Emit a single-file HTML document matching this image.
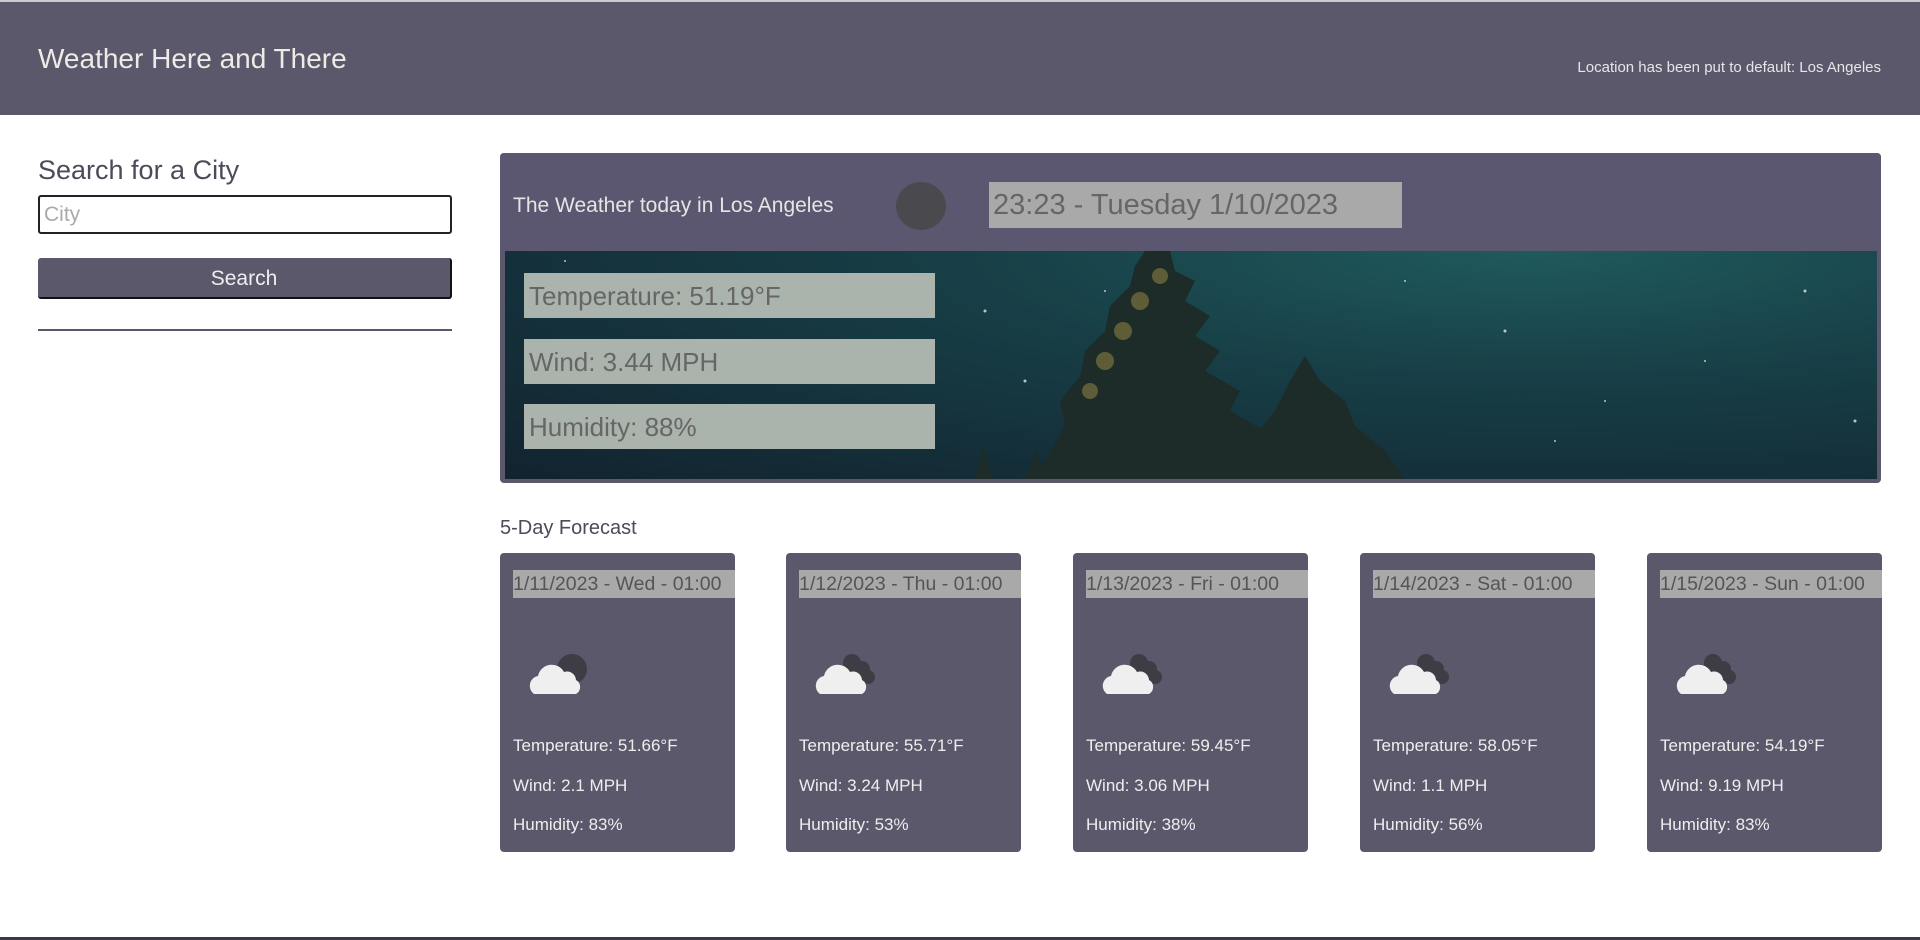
<!DOCTYPE html>
<html><head><meta charset="utf-8"><style>
*{box-sizing:border-box;margin:0;padding:0}
body{width:1920px;height:940px;background:#fff;font-family:"Liberation Sans",sans-serif;position:relative;overflow:hidden}
.hdr{position:absolute;left:0;top:0;width:1920px;height:115px;background:#5c586c;border-top:2px solid #ccc}
.hdr h1{position:absolute;left:38px;top:41px;font-size:28px;font-weight:normal;color:#eeeae6}
.hdr p{position:absolute;right:39px;top:57px;font-size:15px;color:#e6e6e6}
.sh{position:absolute;left:38px;top:155px;font-size:27px;color:#4d4a5a}
.inp{position:absolute;left:38px;top:195px;width:414px;height:39px;border:2px solid #222;border-radius:3px;font-size:21px;color:#aaa;padding:6px 4px}
.btn{position:absolute;left:38px;top:258px;width:414px;height:41px;background:#5c586c;border-radius:3px;border-right:2px solid #111;border-bottom:2px solid #111;color:#eee;font-size:21px;text-align:center;line-height:41px}
.hr{position:absolute;left:38px;top:329px;width:414px;height:2px;background:#555a6a}
.box{position:absolute;left:500px;top:153px;width:1381px;height:330px;background:#5c586c;border-radius:4px;overflow:hidden}
.top{position:absolute;left:0;top:0;width:1381px;height:98px;background:#5b5770}
.top h2{position:absolute;left:13px;top:41px;font-size:21px;font-weight:normal;color:#e8e4e4}
.moon{position:absolute;left:396px;top:29px;width:50px;height:48px;border-radius:50%;background:#4a4a4e}
.date{position:absolute;left:489px;top:29px;width:413px;height:46px;background:#a9a9a9;color:#666;font-size:29px;padding:7px 4px}
.img{position:absolute;left:5px;top:98px;width:1372px;height:228px;background:radial-gradient(ellipse at 75% 0%,#1f5a5c 0%,#173e46 40%,#12232f 100%)}
.stat{position:absolute;left:19px;width:411px;height:45px;background:#aab3ac;color:#666;font-size:26px;padding:8px 5px}
.fl{position:absolute;left:500px;top:517px;font-size:20px;color:#4d4a5a}
.card{position:absolute;top:553px;width:235px;height:299px;background:#5c586c;border-radius:4px;color:#eee;font-size:17px}
.card .d{position:absolute;left:13px;top:17px;right:0;height:28px;background:#a9a9a9;color:#555;font-size:19.5px;line-height:28px;white-space:nowrap;overflow:hidden}
.card svg{position:absolute;left:28px;top:96px}
.card .t{position:absolute;left:13px}
</style></head><body>
<div class="hdr"><h1>Weather Here and There</h1><p>Location has been put to default: Los Angeles</p></div>
<div class="sh">Search for a City</div>
<div class="inp">City</div>
<div class="btn">Search</div>
<div class="hr"></div>
<div class="box">
 <div class="img">
  <svg width="1372" height="228" style="position:absolute;left:0;top:0">
   <g fill="#1d2c28">
    <path d="M640 0 L665 0 L670 20 L690 30 L680 50 L705 65 L690 85 L715 100 L700 120 L735 140 L725 160 L760 180 L770 228 L530 228 L545 200 L560 175 L555 150 L575 125 L580 100 L600 80 L605 55 L625 35 L630 15Z"/>
    <path d="M800 105 L815 130 L840 150 L850 175 L880 200 L900 228 L720 228 L745 190 L770 160 L785 130Z"/>
    <path d="M470 228 L478 195 L488 228Z M520 228 L530 200 L545 228Z"/>
   </g>
   <g fill="#7a7240" opacity=".7"><circle cx="655" cy="25" r="8"/><circle cx="635" cy="50" r="9"/><circle cx="618" cy="80" r="9"/><circle cx="600" cy="110" r="9"/><circle cx="585" cy="140" r="8"/></g>
   <g fill="#fff" opacity=".7"><circle cx="480" cy="60" r="1.5"/><circle cx="520" cy="130" r="1.5"/><circle cx="600" cy="40" r="1"/><circle cx="1000" cy="80" r="1.5"/><circle cx="1100" cy="150" r="1"/><circle cx="1300" cy="40" r="1.5"/><circle cx="1200" cy="110" r="1"/><circle cx="900" cy="30" r="1"/><circle cx="60" cy="10" r="1"/><circle cx="1350" cy="170" r="1.5"/><circle cx="1050" cy="190" r="1"/></g>
  </svg>
  <div class="stat" style="top:22px">Temperature: 51.19°F</div>
  <div class="stat" style="top:88px">Wind: 3.44 MPH</div>
  <div class="stat" style="top:153px">Humidity: 88%</div>
 </div>
 <div class="top"><h2>The Weather today in Los Angeles</h2><div class="moon"></div><div class="date">23:23 - Tuesday 1/10/2023</div></div>
</div>
<div class="fl">5-Day Forecast</div>

<div class="card" style="left:500px"><div class="d">1/11/2023 - Wed - 01:00</div>
<svg width="70" height="50"><circle cx="44" cy="20" r="15" fill="#3e3c44"/><path d="M6 45 a10 10 0 0 1 4 -18 a14 14 0 0 1 26 -4 a9 9 0 0 1 12 8 a8 8 0 0 1 0 14Z" fill="#efefef"/></svg>
<div class="t" style="top:183px">Temperature: 51.66°F</div><div class="t" style="top:223px">Wind: 2.1 MPH</div><div class="t" style="top:262px">Humidity: 83%</div></div>

<div class="card" style="left:786px"><div class="d">1/12/2023 - Thu - 01:00</div>
<svg width="70" height="50"><circle cx="38" cy="14" r="9" fill="#3e3c44"/><circle cx="48" cy="20" r="8" fill="#3e3c44"/><circle cx="54" cy="28" r="7" fill="#3e3c44"/><path d="M6 45 a10 10 0 0 1 4 -18 a14 14 0 0 1 26 -4 a9 9 0 0 1 12 8 a8 8 0 0 1 0 14Z" fill="#efefef"/></svg>
<div class="t" style="top:183px">Temperature: 55.71°F</div><div class="t" style="top:223px">Wind: 3.24 MPH</div><div class="t" style="top:262px">Humidity: 53%</div></div>

<div class="card" style="left:1073px"><div class="d">1/13/2023 - Fri - 01:00</div>
<svg width="70" height="50"><circle cx="38" cy="14" r="9" fill="#3e3c44"/><circle cx="48" cy="20" r="8" fill="#3e3c44"/><circle cx="54" cy="28" r="7" fill="#3e3c44"/><path d="M6 45 a10 10 0 0 1 4 -18 a14 14 0 0 1 26 -4 a9 9 0 0 1 12 8 a8 8 0 0 1 0 14Z" fill="#efefef"/></svg>
<div class="t" style="top:183px">Temperature: 59.45°F</div><div class="t" style="top:223px">Wind: 3.06 MPH</div><div class="t" style="top:262px">Humidity: 38%</div></div>

<div class="card" style="left:1360px"><div class="d">1/14/2023 - Sat - 01:00</div>
<svg width="70" height="50"><circle cx="38" cy="14" r="9" fill="#3e3c44"/><circle cx="48" cy="20" r="8" fill="#3e3c44"/><circle cx="54" cy="28" r="7" fill="#3e3c44"/><path d="M6 45 a10 10 0 0 1 4 -18 a14 14 0 0 1 26 -4 a9 9 0 0 1 12 8 a8 8 0 0 1 0 14Z" fill="#efefef"/></svg>
<div class="t" style="top:183px">Temperature: 58.05°F</div><div class="t" style="top:223px">Wind: 1.1 MPH</div><div class="t" style="top:262px">Humidity: 56%</div></div>

<div class="card" style="left:1647px"><div class="d">1/15/2023 - Sun - 01:00</div>
<svg width="70" height="50"><circle cx="38" cy="14" r="9" fill="#3e3c44"/><circle cx="48" cy="20" r="8" fill="#3e3c44"/><circle cx="54" cy="28" r="7" fill="#3e3c44"/><path d="M6 45 a10 10 0 0 1 4 -18 a14 14 0 0 1 26 -4 a9 9 0 0 1 12 8 a8 8 0 0 1 0 14Z" fill="#efefef"/></svg>
<div class="t" style="top:183px">Temperature: 54.19°F</div><div class="t" style="top:223px">Wind: 9.19 MPH</div><div class="t" style="top:262px">Humidity: 83%</div></div>

<div style="position:absolute;left:0;top:937px;width:1920px;height:3px;background:#3a3848"></div>
</body></html>
